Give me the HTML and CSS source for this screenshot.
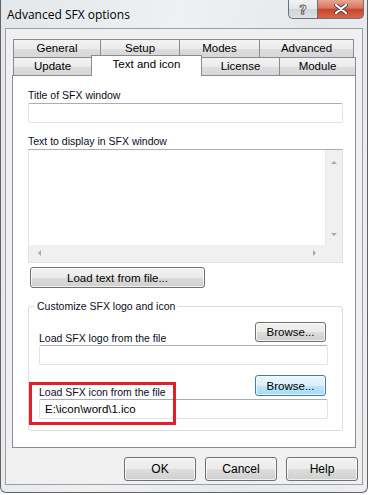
FILE: index.html
```html
<!DOCTYPE html>
<html lang="en">
<head>
    <meta charset="UTF-8">
    <title>Advanced SFX options</title>
    <link rel="stylesheet" href="styles.css">
</head>
<body>
    <div class="window">
        <div class="titlebar">
            <span class="title">Advanced SFX options</span>
            <div class="caption">
                <div class="cap-btn cap-help">?</div>
                <div class="cap-btn cap-close">
                    <svg width="14" height="10" viewBox="0 0 14 10">
                        <path d="M2 1 L12 9 M12 1 L2 9" stroke="#4a4a4a" stroke-width="4" stroke-linecap="round"/>
                        <path d="M2 1 L12 9 M12 1 L2 9" stroke="#fff" stroke-width="2.2" stroke-linecap="round"/>
                    </svg>
                </div>
            </div>
        </div>

        <div class="client">
            <div class="tab-row">
                <div class="tab w-general">General</div>
                <div class="tab w-setup">Setup</div>
                <div class="tab w-modes">Modes</div>
                <div class="tab w-advanced">Advanced</div>
            </div>
            <div class="tab-row">
                <div class="tab w-update">Update</div>
                <div class="tab tab-active w-text">Text and icon</div>
                <div class="tab w-license">License</div>
                <div class="tab w-module">Module</div>
            </div>

            <div class="panel">
                <label class="lbl lbl-title">Title of SFX window</label>
                <div class="field"></div>

                <label class="lbl lbl-text">Text to display in SFX window</label>
                <div class="textbox">
                    <div class="text-area"></div>
                    <div class="vbar">
                        <span class="arrow arrow-up"></span>
                        <span class="arrow arrow-down"></span>
                    </div>
                    <div class="hbar">
                        <span class="arrow arrow-left"></span>
                        <span class="arrow arrow-right"></span>
                    </div>
                    <div class="corner"></div>
                </div>

                <button class="btn btn-load">Load text from file...</button>

                <div class="group">
                    <span class="legend">Customize SFX logo and icon</span>

                    <div class="browse-row">
                        <label class="lbl lbl-inline">Load SFX logo from the file</label>
                        <button class="btn btn-browse">Browse...</button>
                    </div>
                    <div class="field field-small"></div>

                    <div class="browse-row browse-row-2">
                        <label class="lbl lbl-inline">Load SFX icon from the file</label>
                        <button class="btn btn-browse btn-focus">Browse...</button>
                    </div>
                    <div class="field field-small">E:\icon\word\1.ico</div>

                    <div class="highlight"></div>
                </div>
            </div>

            <div class="footer">
                <button class="btn btn-dlg">OK</button>
                <button class="btn btn-dlg">Cancel</button>
                <button class="btn btn-dlg">Help</button>
            </div>
        </div>
    </div>
</body>
</html>
```

FILE: styles.css
```css
* {
    box-sizing: border-box;
}
html, body {
    margin: 0;
    padding: 0;
    width: 369px;
    height: 495px;
    overflow: hidden;
    background: #ffffff;
}
body {
    font-family: "Liberation Sans", Arial, sans-serif;
    font-size: 11px;
    color: #000;
}
.window {
    width: 368px;
    height: 493px;
    border: 1px solid #626262;
    border-top: none;
    border-radius: 0 0 6px 6px;
    background: linear-gradient(100deg, #e4e7ea 0%, #eef0f2 40%, #e6e9ec 70%, #eceef0 100%);
    padding: 0 4px 0 4px;
}
.titlebar {
    height: 28px;
    display: flex;
    justify-content: space-between;
    align-items: flex-start;
}
.title {
    font-family: "Open Sans", "Noto Sans", sans-serif;
    font-size: 12px;
    margin: 6px 0 0 2px;
    color: #000;
}
.caption {
    display: flex;
    margin-right: -1px;
}
.cap-btn {
    height: 19px;
    border: 1px solid #6d7178;
    border-top: none;
    display: flex;
    align-items: center;
    justify-content: center;
}
.cap-help {
    width: 29px;
    border-right: none;
    border-radius: 0 0 0 5px;
    background: linear-gradient(#f1f3f5 0%, #e3e6ea 50%, #cfd4da 51%, #dde1e5 100%);
    font-family: "DejaVu Sans", sans-serif;
    font-size: 13px;
    font-weight: bold;
    color: #fff;
    -webkit-text-stroke: 0.8px #555;
}
.cap-close {
    width: 47px;
    border-radius: 0 0 5px 0;
    background: linear-gradient(#e8a593 0%, #d9745e 45%, #c6452c 52%, #d8664a 100%);
}

.client {
    height: 457px;
    border: 1px solid #9ba0a6;
    background: #f0f0f0;
    padding: 10px 4px 0 6px;
}
.tab-row {
    display: flex;
    margin-left: 1px;
    height: 18px;
}
.tab {
    height: 18px;
    border: 1px solid #898c95;
    border-bottom: none;
    margin-right: -1px;
    background: linear-gradient(#f3f3f3 0%, #ebebeb 50%, #dedede 51%, #d6d6d6 100%);
    text-align: center;
    line-height: 17px;
    font-size: 11.5px;
}
.tab-active {
    position: relative;
    top: -2px;
    height: 21px;
    background: #fff;
    z-index: 2;
    line-height: 16px;
}
.w-general { width: 88px; }
.w-setup { width: 80px; }
.w-modes { width: 81px; }
.w-advanced { width: 95px; }
.w-update { width: 79px; }
.w-text { width: 111px; }
.w-license { width: 79px; }
.w-module { width: 77px; }

.panel {
    position: relative;
    width: 344px;
    height: 373px;
    border: 1px solid #898c95;
    background: #fff;
    padding: 0 12px 0 15px;
}
.lbl {
    display: block;
    line-height: 14px;
    font-size: 10.5px;
    color: #0c0c1e;
}
.lbl-title {
    margin-top: 12px;
}
.lbl-text {
    margin-top: 11px;
}
.field {
    height: 20px;
    margin-top: 1px;
    border: 1px solid #e2e3ea;
    border-top-color: #abadb3;
    border-radius: 2px;
    background: #fff;
    padding: 0 5px;
    line-height: 18px;
    font-size: 11.5px;
}
.textbox {
    margin-top: 1px;
    height: 114px;
    border: 1px solid #e2e3ea;
    border-top-color: #abadb3;
    display: grid;
    grid-template-columns: 1fr 17px;
    grid-template-rows: 1fr 17px;
}
.vbar, .hbar {
    background: #f0f0f0;
    position: relative;
}
.vbar {
    border-left: 1px solid #e8e8e8;
}
.corner {
    background: #f0f0f0;
}
.arrow {
    position: absolute;
    width: 0;
    height: 0;
    border: 3px solid transparent;
}
.arrow-up {
    left: 5px;
    top: 8px;
    border-bottom-color: #a8a8a8;
}
.arrow-down {
    left: 5px;
    bottom: 6px;
    border-top-color: #a8a8a8;
}
.arrow-left {
    left: 6px;
    top: 5px;
    border-right-color: #a8a8a8;
}
.arrow-right {
    right: 6px;
    top: 5px;
    border-left-color: #a8a8a8;
}

.btn {
    display: block;
    font-family: "Liberation Sans", Arial, sans-serif;
    font-size: 11.5px;
    color: #000;
    border: 1px solid #707070;
    border-radius: 3px;
    background: linear-gradient(#f2f2f2 0%, #ebebeb 50%, #dddddd 51%, #cfcfcf 100%);
    padding: 0;
    box-shadow: inset 0 0 0 1px rgba(255, 255, 255, 0.7);
}
.btn-load {
    width: 175px;
    height: 21px;
    margin: 4px 0 0 2px;
}
.group {
    position: relative;
    margin-top: 18px;
    height: 125px;
    border: 1px solid #d5dfe5;
    border-radius: 3px;
    padding: 15px 14px 0 10px;
}
.legend {
    position: absolute;
    top: -8px;
    left: 5px;
    padding: 0 3px;
    background: #fff;
    line-height: 14px;
    font-size: 10.5px;
    color: #0c0c1e;
}
.browse-row {
    display: flex;
    justify-content: space-between;
    align-items: flex-end;
    padding-right: 2px;
}
.browse-row-2 {
    margin-top: 10px;
}
.lbl-inline {
    margin-bottom: -3px;
}
.field-small {
    margin-top: 3px;
    height: 20px;
}
.btn-browse {
    width: 71px;
    height: 20px;
}
.btn-focus {
    height: 21px;
    border-color: #3c7fb1;
    background: linear-gradient(#eaf6fd 0%, #d9f0fc 50%, #bee6fd 51%, #a7d9f5 100%);
}
.highlight {
    position: absolute;
    left: 0;
    top: 75px;
    width: 147px;
    height: 43px;
    border: 3px solid #e3202a;
}

.footer {
    display: flex;
    justify-content: flex-end;
    gap: 9px;
    margin-top: 9px;
}
.btn-dlg {
    width: 72px;
    height: 24px;
    font-size: 12px;
}
```
